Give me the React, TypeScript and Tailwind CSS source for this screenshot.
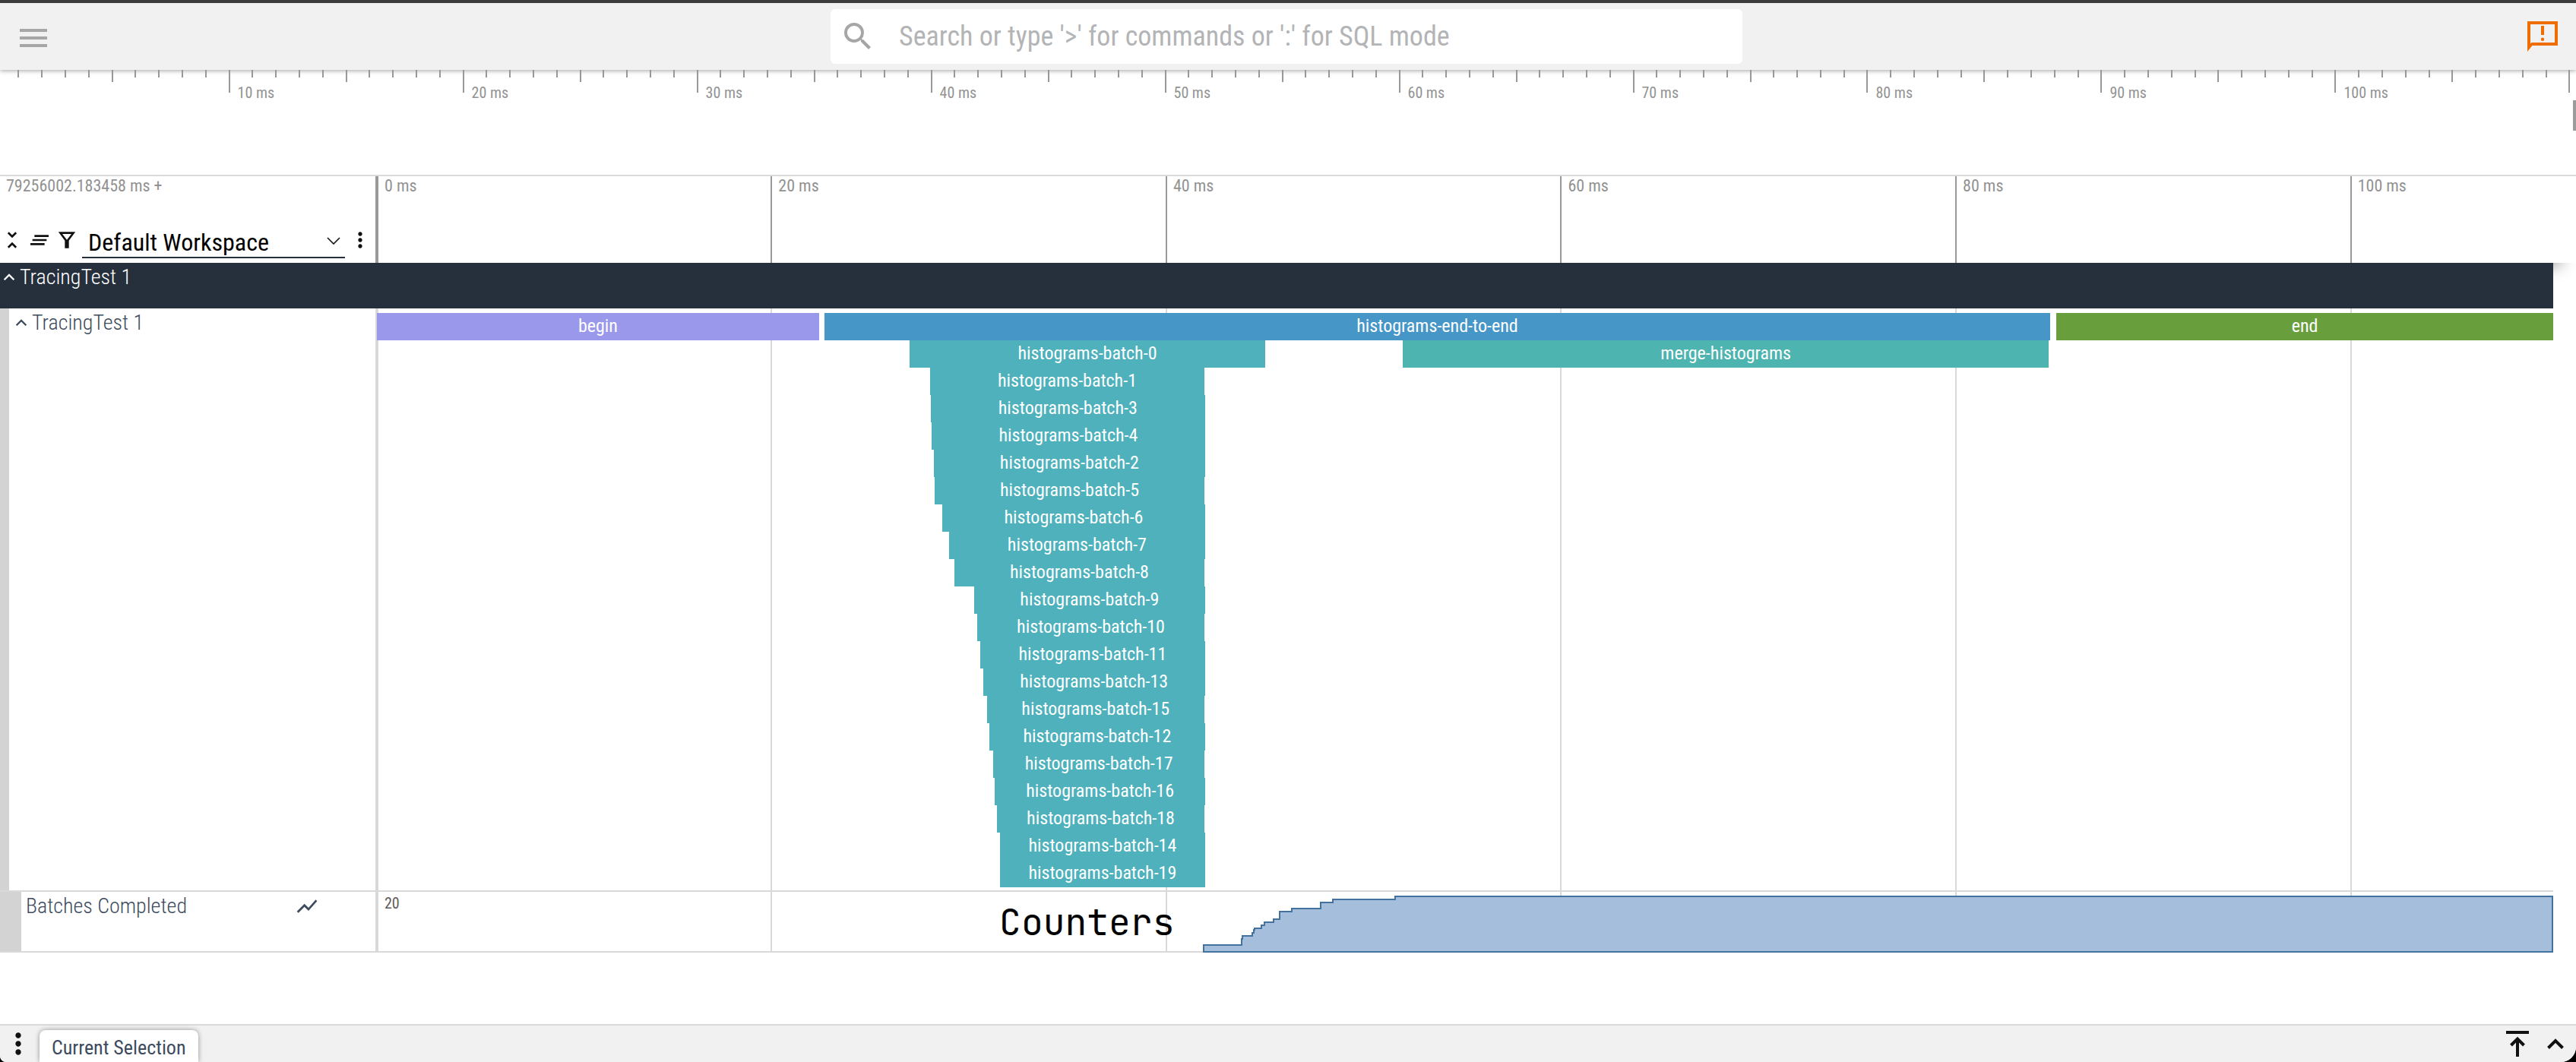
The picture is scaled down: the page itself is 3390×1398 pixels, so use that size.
import React from 'react';

const TOTAL_MS = 110.24;
const OVERVIEW_MS = 110.07;
const OVERVIEW_OFFSET_MS = -0.24;

type Slice = { name: string; start: number; end: number; color: string };

const TEAL = 'bg-[#4eb1bc]';

const batch = (id: number, start: number, end = 41.95): Slice[] => [
  { name: `histograms-batch-${id}`, start, end, color: TEAL },
];

const SLICE_ROWS: Slice[][] = [
  [
    { name: 'begin', start: 0, end: 22.4, color: 'bg-[#9a98ea]' },
    { name: 'histograms-end-to-end', start: 22.67, end: 84.76, color: 'bg-[#4696c7]' },
    { name: 'end', start: 85.07, end: TOTAL_MS, color: 'bg-[#689f3c]' },
  ],
  [
    { name: 'histograms-batch-0', start: 26.98, end: 45, color: TEAL },
    { name: 'merge-histograms', start: 51.96, end: 84.7, color: 'bg-[#4eb4af]' },
  ],
  batch(1, 28.02, 41.92),
  batch(3, 28.05),
  batch(4, 28.1),
  batch(2, 28.21),
  batch(5, 28.25, 41.92),
  batch(6, 28.64),
  batch(7, 28.98),
  batch(8, 29.25, 41.92),
  batch(9, 30.25),
  batch(10, 30.41, 41.92),
  batch(11, 30.56),
  batch(13, 30.7),
  batch(15, 30.89, 41.92),
  batch(12, 31.02),
  batch(17, 31.22, 41.92),
  batch(16, 31.31),
  batch(18, 31.41, 41.92),
  batch(14, 31.56),
  batch(19, 31.56),
];

const GRID_MS = [0, 20, 40, 60, 80, 100];

const percent = (ms: number) => `${(ms / TOTAL_MS) * 100}%`;
// Grid lines are centred on their time, except the first, which stays inside the panel.
const linePercent = (ms: number) => percent(Math.max(ms - 0.05, 0));
const overviewPercent = (ms: number) => `${((ms + OVERVIEW_OFFSET_MS) / OVERVIEW_MS) * 100}%`;

type IconProps = { d: string; className: string; viewBox?: string };

function Icon({ d, className, viewBox = '0 0 24 24' }: IconProps) {
  return (
    <svg viewBox={viewBox} className={`shrink-0 ${className}`} fill="currentColor" aria-hidden="true">
      <path d={d} />
    </svg>
  );
}

const PATHS = {
  menu: 'M3 18h18v-2H3v2zm0-5h18v-2H3v2zm0-7v2h18V6H3z',
  search:
    'M15.5 14h-.79l-.28-.27A6.471 6.471 0 0 0 16 9.5 6.5 6.5 0 1 0 9.5 16c1.61 0 3.09-.59 4.23-1.57l.27.28v.79l5 4.99L20.49 19l-4.99-5zm-6 0C7.01 14 5 11.99 5 9.5S7.01 5 9.5 5 14 7.01 14 9.5 11.99 14 9.5 14z',
  announcement:
    'M2 2h20v16H5.2L2 22V2zm2 2v12.8l.8-.8H20V4H4zm7 1h2v6h-2V5zm1 7.8a1.1 1.1 0 1 1 0 2.2 1.1 1.1 0 0 1 0-2.2z',
  unfoldLess:
    'M7.41 18.59 8.83 20 12 16.83 15.17 20l1.41-1.41L12 14l-4.59 4.59zm9.18-13.18L15.17 4 12 7.17 8.83 4 7.41 5.41 12 10l4.59-4.59z',
  clearAll: 'M5 13h14v-2H5v2zm-2 4h14v-2H3v2zM7 7v2h14V7H7z',
  filter: 'M3.600 4h16.800L14 12.600V20h-4v-7.400L3.600 4zm3.900 2 4.500 5.800L16.500 6h-9z',
  moreVert:
    'M12 8c1.1 0 2-.9 2-2s-.9-2-2-2-2 .9-2 2 .9 2 2 2zm0 2c-1.1 0-2 .9-2 2s.9 2 2 2 2-.9 2-2-.9-2-2-2zm0 6c-1.1 0-2 .9-2 2s.9 2 2 2 2-.9 2-2-.9-2-2-2z',
  expandLess: 'M12 8l-6 6 1.41 1.41L12 10.83l4.59 4.58L18 14z',
  showChart: 'M3.5 18.49l6-6.01 4 4L22 6.92l-1.41-1.41-7.09 7.97-4-4L2 16.99z',
};

function Topbar() {
  return (
    <header className="flex h-[92px] items-center justify-between border-t-4 border-[#3c3c3c] bg-[#f1f1f1] px-5 shadow-[0_2px_5px_rgba(0,0,0,0.28)]">
      <div className="flex flex-1">
        <button type="button" aria-label="Menu" className="pt-1 text-[#a6a6a6]">
          <Icon d={PATHS.menu} className="size-12" />
        </button>
      </div>
      <label className="mr-1 flex h-[72px] w-[1200px] items-center gap-[30px] rounded-md bg-white px-3 text-[#a6a6a6]">
        <Icon d={PATHS.search} className="size-12" />
        <input
          type="text"
          aria-label="Search"
          placeholder="Search or type '>' for commands or ':' for SQL mode"
          className="min-w-0 flex-1 text-[36px] text-gray-800 outline-none placeholder:text-[#b3b4b6]"
        />
      </label>
      <div className="flex flex-1 justify-end">
        <button type="button" aria-label="Notifications" className="text-[#ef6c00]">
          <Icon d={PATHS.announcement} className="size-12" />
        </button>
      </div>
    </header>
  );
}

function Overview() {
  const ticks = Array.from({ length: 110 }, (_, i) => i + 1);
  return (
    <section aria-label="Overview" className="relative h-[138px] overflow-hidden">
      {ticks.map((ms) => {
        const height = ms % 10 === 0 ? 'h-[30px]' : ms % 5 === 0 ? 'h-4' : 'h-[10px]';
        return (
          <div key={ms} className="absolute top-0 flex" style={{ left: overviewPercent(ms) }}>
            <span className={`w-[2px] bg-[#989898] ${height}`} />
            {ms % 10 === 0 && ms < 110 && (
              <span className="pt-[18px] pl-[10px] text-[20px] leading-6 whitespace-nowrap text-[#929292]">
                {ms} ms
              </span>
            )}
          </div>
        );
      })}
      <span className="absolute top-10 right-0 h-10 w-1 bg-[#9b9b9b]" />
    </section>
  );
}

function TimeAxis() {
  return (
    <section
      aria-label="Time axis"
      className="flex h-[116px] border-t-2 border-[#dadada] bg-white shadow-[0_24px_20px_-20px_rgba(0,0,0,0.4)]"
    >
      <div className="flex w-[496px] shrink-0 flex-col justify-between border-r-2 border-[#999]">
        <p className="pl-2 text-[22px] leading-[26px] text-[#929292]">79256002.183458 ms +</p>
        <div className="flex items-center gap-1 pb-[6px] text-[#111]">
          <button type="button" aria-label="Collapse all">
            <Icon d={PATHS.unfoldLess} className="size-8" />
          </button>
          <button type="button" aria-label="Clear pinned tracks">
            <Icon d={PATHS.clearAll} className="size-8" />
          </button>
          <button type="button" aria-label="Filter tracks">
            <Icon d={PATHS.filter} className="size-8" />
          </button>
          <div className="relative flex-1">
            <select
              aria-label="Workspace"
              className="h-12 w-full appearance-none border-b-2 border-[#262f3c] px-2 pt-[3px] text-[32px] text-black"
            >
              <option>Default Workspace</option>
            </select>
            <svg
              viewBox="0 0 18 10"
              className="pointer-events-none absolute top-5 right-[6px] h-[10px] w-[18px]"
              fill="none"
              stroke="#111"
              strokeWidth="1.6"
              aria-hidden="true"
            >
              <path d="M1 1l8 8 8-8" />
            </svg>
          </div>
          <button type="button" aria-label="Workspace options" className="pr-1">
            <Icon d={PATHS.moreVert} className="size-8" />
          </button>
        </div>
      </div>
      <div className="relative mr-[30px] flex-1">
        {GRID_MS.map((ms) => (
          <div
            key={ms}
            className="absolute inset-y-0 border-l-2 border-[#999] pl-2 text-[22px] leading-[26px] whitespace-nowrap text-[#929292]"
            style={{ left: linePercent(ms) }}
          >
            {ms} ms
          </div>
        ))}
      </div>
    </section>
  );
}

function GridLines() {
  return (
    <>
      {GRID_MS.map((ms) => (
        <span key={ms} className="absolute inset-y-0 w-[2px] bg-[#d9d9d9]" style={{ left: linePercent(ms) }} />
      ))}
    </>
  );
}

function SliceRow({ slices }: { slices: Slice[] }) {
  return (
    <div className="flex h-9">
      {slices.map((slice, i) => {
        const previousEnd = i === 0 ? 0 : slices[i - 1].end;
        return (
          <div
            key={slice.name}
            className={`shrink-0 overflow-hidden text-center text-[24px] leading-[34px] whitespace-nowrap text-white ${slice.color}`}
            style={{ marginLeft: percent(slice.start - previousEnd), width: percent(slice.end - slice.start) }}
          >
            {slice.name}
          </div>
        );
      })}
    </div>
  );
}

function GroupHeader() {
  return (
    <div className="relative mr-[30px] flex h-[60px] items-start bg-[#262f3c] pt-[3px] text-white">
      <button type="button" aria-expanded="true" className="flex items-center gap-[2px] text-[28px] leading-8 font-light">
        <Icon d={PATHS.expandLess} viewBox="2 2 20 20" className="size-6" />
        TracingTest 1
      </button>
    </div>
  );
}

function SliceTrack() {
  return (
    <div className="relative mr-[30px] flex border-b-2 border-[#d9d9d9] bg-white">
      <div className="flex w-[496px] shrink-0 items-start border-r-2 border-[#d9d9d9] text-[#3c4b5d]">
        <span className="w-3 self-stretch bg-[#d3d3d3]" />
        <button
          type="button"
          aria-expanded="true"
          className="flex items-center gap-[2px] pt-[3px] pl-1 text-[28px] leading-8 font-light"
        >
          <Icon d={PATHS.expandLess} viewBox="2 2 20 20" className="size-6" />
          TracingTest 1
        </button>
      </div>
      <div className="relative flex-1">
        <GridLines />
        <div className="relative pt-[6px] pb-1">
          {SLICE_ROWS.map((slices) => (
            <SliceRow key={slices[0].name} slices={slices} />
          ))}
        </div>
      </div>
    </div>
  );
}

function CounterTrack() {
  return (
    <div className="relative mr-[30px] flex h-20 border-b-2 border-[#d9d9d9] bg-white">
      <div className="flex w-[496px] shrink-0 items-start border-r-2 border-[#d9d9d9] text-[#3c4b5d]">
        <span className="w-7 self-stretch bg-[#d3d3d3]" />
        <span className="flex-1 pt-[3px] pl-[6px] text-[28px] leading-8 font-light">Batches Completed</span>
        <button type="button" aria-label="Counter options" className="mr-[74px] pt-[3px]">
          <Icon d={PATHS.showChart} className="size-8" />
        </button>
      </div>
      <div className="relative flex-1">
        <GridLines />
        <svg
          viewBox="0 0 2864 80"
          preserveAspectRatio="none"
          className="absolute inset-x-0 top-0 h-20 w-full"
          fill="#a4bedc"
          stroke="#44729e"
          strokeWidth="2"
          aria-label="Batches completed over time"
        >
          <path
            vectorEffect="non-scaling-stroke"
            d="M1088 79V70H1138V62H1139V58H1140V58H1152V54H1154V50H1155V48H1164V44H1168V40H1180V36H1188V26H1204V22H1242V14H1258V10H1340V6H2863V79Z"
          />
        </svg>
        <span className="relative block pt-[3px] pl-[10px] text-[20px] leading-6 text-[#5c5c5c]">20</span>
        <span className="absolute top-2 left-[28.6%] font-['JetBrains_Mono','DejaVu_Sans_Mono',monospace] text-[48px] leading-[64px] text-black">
          Counters
        </span>
      </div>
    </div>
  );
}

function Drawer() {
  return (
    <footer className="mt-auto flex h-[50px] items-end justify-between border-t-2 border-[#d9d9d9] bg-[#f1f1f1] text-[#111]">
      <div className="flex h-full items-end gap-[6px]">
        <button type="button" aria-label="Tabs" className="self-center pl-[2px]">
          <Icon d={PATHS.moreVert} className="size-11" />
        </button>
        <button
          type="button"
          className="h-[42px] rounded-t-lg bg-white px-4 text-[26px] leading-[46px] text-[#3c4b5d] shadow-[0_0_6px_rgba(0,0,0,0.4)]"
        >
          Current Selection
        </button>
      </div>
      <div className="flex h-full items-center gap-6 pr-4">
        <button type="button" aria-label="Open fullscreen">
          <svg viewBox="0 0 30 34" className="h-[34px] w-[30px]" fill="none" stroke="currentColor" strokeWidth="4" aria-hidden="true">
            <path d="M0 2h30M15 34V11M6.500 19l8.500-8.500L23.500 19" />
          </svg>
        </button>
        <button type="button" aria-label="Show drawer">
          <svg viewBox="0 0 22 14" className="h-[14px] w-[22px]" fill="none" stroke="currentColor" strokeWidth="4" aria-hidden="true">
            <path d="M1.500 12.500L11 3l9.500 9.500" />
          </svg>
        </button>
      </div>
    </footer>
  );
}

export default function App() {
  return (
    <div className="bg-black font-['Roboto_Condensed',Roboto,sans-serif]">
      <div className="flex min-h-screen flex-col overflow-hidden rounded-br-[20px] rounded-bl-lg bg-white">
        <Topbar />
        <Overview />
        <TimeAxis />
        <main>
          <GroupHeader />
          <SliceTrack />
          <CounterTrack />
        </main>
        <Drawer />
      </div>
    </div>
  );
}
